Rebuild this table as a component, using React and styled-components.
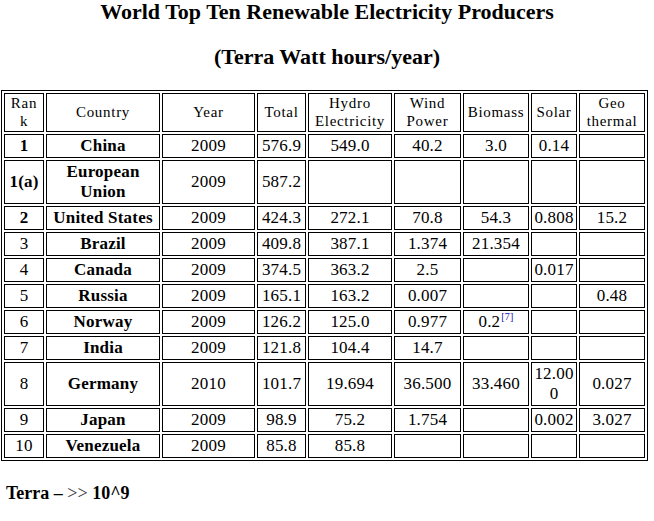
import React from 'react';
import styled, { createGlobalStyle } from 'styled-components';

const Global = createGlobalStyle`
  html, body { margin: 0; padding: 0; background: #fff; }
  body { font-family: "Liberation Serif", "Times New Roman", serif; color: #000; }
`;

const Page = styled.div`
  width: 654px;
  display: flex;
  flex-direction: column;
`;

const Headings = styled.header`
  display: flex;
  flex-direction: column;
  gap: 21px;
  padding-bottom: 21px;
`;

const Heading = styled.h1`
  margin: 0;
  font-size: 22px;
  line-height: 24px;
  font-weight: bold;
  text-align: center;
`;

const Table = styled.table`
  margin-left: 1px;
  width: 647px;
  table-layout: fixed;
  border: 1px solid #000;
  border-spacing: 2px;
  border-collapse: separate;
`;

const HeadCell = styled.th`
  box-sizing: border-box;
  width: ${(p) => p.$w}px;
  border: 1px solid #000;
  padding: 1px 0;
  font-weight: normal;
  font-size: 15px;
  line-height: 17.5px;
  letter-spacing: 0.7px;
  text-align: center;
  vertical-align: middle;
`;

const Cell = styled.td`
  border: 1px solid #000;
  padding: 1px 0;
  font-size: 17px;
  line-height: 20px;
  letter-spacing: 0.2px;
  text-align: center;
  vertical-align: middle;
  font-weight: ${(p) => (p.$bold ? 'bold' : 'normal')};
  white-space: nowrap;
`;

const Ref = styled.sup`
  font-size: 10px;
  line-height: 0;
  color: #1a0dab;
  vertical-align: 7px;
  margin-left: 1px;
`;

const Footer = styled.p`
  margin: 22px 0 0 6px;
  font-size: 18px;
  line-height: 21px;
  font-weight: bold;
`;

const Thin = styled.span`
  font-weight: normal;
  color: #333;
`;

const columns = [
  { w: 40, label: ['Ran', 'k'] },
  { w: 114, label: ['Country'] },
  { w: 93, label: ['Year'] },
  { w: 49, label: ['Total'] },
  { w: 84, label: ['Hydro', 'Electricity'] },
  { w: 67, label: ['Wind', 'Power'] },
  { w: 66, label: ['Biomass'] },
  { w: 46, label: ['Solar'] },
  { w: 66, label: ['Geo', 'thermal'] },
];

const rows = [
  { rank: '1', rb: true, country: ['China'], year: '2009', total: '576.9', hydro: '549.0', wind: '40.2', bio: '3.0', solar: ['0.14'], geo: '' },
  { rank: '1(a)', rb: true, country: ['European', 'Union'], year: '2009', total: '587.2', hydro: '', wind: '', bio: '', solar: [''], geo: '' },
  { rank: '2', rb: true, country: ['United States'], year: '2009', total: '424.3', hydro: '272.1', wind: '70.8', bio: '54.3', solar: ['0.808'], geo: '15.2' },
  { rank: '3', country: ['Brazil'], year: '2009', total: '409.8', hydro: '387.1', wind: '1.374', bio: '21.354', solar: [''], geo: '' },
  { rank: '4', country: ['Canada'], year: '2009', total: '374.5', hydro: '363.2', wind: '2.5', bio: '', solar: ['0.017'], geo: '' },
  { rank: '5', country: ['Russia'], year: '2009', total: '165.1', hydro: '163.2', wind: '0.007', bio: '', solar: [''], geo: '0.48' },
  { rank: '6', country: ['Norway'], year: '2009', total: '126.2', hydro: '125.0', wind: '0.977', bio: '0.2', ref: '[7]', solar: [''], geo: '' },
  { rank: '7', country: ['India'], year: '2009', total: '121.8', hydro: '104.4', wind: '14.7', bio: '', solar: [''], geo: '' },
  { rank: '8', country: ['Germany'], year: '2010', total: '101.7', hydro: '19.694', wind: '36.500', bio: '33.460', solar: ['12.00', '0'], geo: '0.027' },
  { rank: '9', country: ['Japan'], year: '2009', total: '98.9', hydro: '75.2', wind: '1.754', bio: '', solar: ['0.002'], geo: '3.027' },
  { rank: '10', country: ['Venezuela'], year: '2009', total: '85.8', hydro: '85.8', wind: '', bio: '', solar: [''], geo: '' },
];

const Lines = ({ parts }) =>
  parts.map((t, i) => (
    <React.Fragment key={i}>
      {i > 0 && <br />}
      {t}
    </React.Fragment>
  ));

export default function App() {
  return (
    <Page>
      <Global />
      <Headings>
        <Heading>World Top Ten Renewable Electricity Producers</Heading>
        <Heading>(Terra Watt hours/year)</Heading>
      </Headings>
      <Table>
        <thead>
          <tr>
            {columns.map((c, i) => (
              <HeadCell key={i} $w={c.w}>
                <Lines parts={c.label} />
              </HeadCell>
            ))}
          </tr>
        </thead>
        <tbody>
          {rows.map((r, i) => (
            <tr key={i}>
              <Cell $bold={r.rb}>{r.rank}</Cell>
              <Cell $bold>
                <Lines parts={r.country} />
              </Cell>
              <Cell>{r.year}</Cell>
              <Cell>{r.total}</Cell>
              <Cell>{r.hydro}</Cell>
              <Cell>{r.wind}</Cell>
              <Cell>
                {r.bio}
                {r.ref && <Ref>{r.ref}</Ref>}
              </Cell>
              <Cell>
                <Lines parts={r.solar} />
              </Cell>
              <Cell>{r.geo}</Cell>
            </tr>
          ))}
        </tbody>
      </Table>
      <Footer>
        Terra – <Thin>&gt;&gt;</Thin> 10^9
      </Footer>
    </Page>
  );
}
